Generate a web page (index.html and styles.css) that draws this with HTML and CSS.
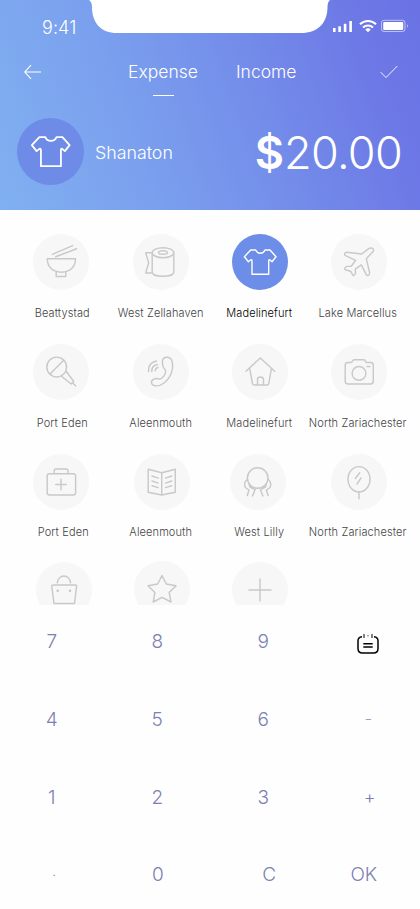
FILE: index.html
```
<!DOCTYPE html>
<html lang="en">
<head>
<meta charset="utf-8">
<title>Add expense</title>
<link rel="stylesheet" href="styles.css">
</head>
<body>
<svg class="defs" width="0" height="0">
  <symbol id="shirt" viewBox="0 0 56 56"><path d="M18.7 16H23.7C24.5 18 25.5 19.2 28.3 19.2S32.2 18 33 16H38L44 22.7L40 27.7L37.8 25.8Q36.7 25.3 36.7 27V40.3H20V27Q20 25.3 18.8 25.8L16.4 27.7L12.4 22.7Z"/></symbol>
</svg>
<div class="screen">
  <header class="top">
    <svg class="notch" viewBox="0 0 242 34"><path d="M0 0Q3 2 3 7C3 23 12 33 28 33H212C229 33 238.500 23 238.500 7Q238.500 2 241 0Z"/></svg>
    <div class="status">
      <span class="time">9:41</span>
      <svg class="signals" viewBox="0 0 76 14">
        <g fill="#fff"><rect x="0" y="9" width="2.6" height="4"/><rect x="5.3" y="7.3" width="2.6" height="5.7"/><rect x="10.8" y="4.8" width="2.6" height="8.2"/><rect x="16.3" y="2" width="2.6" height="11"/></g>
        <g fill="none" stroke="#fff" stroke-width="2"><path d="M27 5.2A11.5 11.5 0 0 1 43 5.2"/><path d="M30 8.4A7.3 7.3 0 0 1 40 8.4"/></g>
        <path d="M32.3 10.6A4 4 0 0 1 37.7 10.6L35 13.2Z" fill="#fff"/>
        <rect x="48.5" y="1.3" width="23.5" height="11.2" rx="2.5" fill="none" stroke="#fff" stroke-opacity=".55"/>
        <rect x="50.2" y="2.9" width="20" height="8" rx="1" fill="#fff"/>
        <path d="M74 5V9Q75.6 7 74 5Z" fill="#fff" fill-opacity=".8"/>
      </svg>
    </div>
    <nav class="nav">
      <svg class="back" viewBox="0 0 18 16"><path d="M17 8H1M7 1.2L.8 8L7 14.8"/></svg>
      <span class="tab expense">Expense</span>
      <span class="tab income">Income</span>
      <svg class="done" viewBox="0 0 18 14"><path d="M.7 7.2L6 12.6L17.3 1"/></svg>
    </nav>
    <div class="summary">
      <span class="avatar"><svg viewBox="0 0 56 56"><use href="#shirt"/></svg></span>
      <span class="name">Shanaton</span>
      <span class="amount"><b>$</b><span class="value">20.00</span></span>
    </div>
  </header>

  <main class="categories">
    <div class="cat"><svg class="icon left" viewBox="0 0 56 56"><path d="M14.3 24.8H42.5C42.5 33 37 38.2 28.4 38.2S14.3 33 14.3 24.8ZM23.2 38V42.5H32.8V38M19.3 20.3L39.7 11.7M22.7 22.7L43.7 14.7"/></svg><span class="label">Beattystad</span></div>
    <div class="cat"><svg class="icon middle" viewBox="0 0 56 56"><ellipse cx="30" cy="18.7" rx="10.8" ry="5"/><ellipse cx="30" cy="18.5" rx="4.5" ry="1.8"/><path d="M19.2 18.7V38.2C19.2 43.7 40.8 43.7 40.8 38.2V18.7M19.2 18.7H12.7L15.7 29L12.7 38.9H19.2"/></svg><span class="label">West Zellahaven</span></div>
    <div class="cat active"><svg class="icon right" viewBox="0 0 56 56"><use href="#shirt"/></svg><span class="label">Madelinefurt</span></div>
    <div class="cat"><svg class="icon right" viewBox="0 0 56 56"><path d="M37 15.2C39.3 13.3 43.5 13.5 42.3 17.2L35.3 24.7L38.7 39C38.5 41.5 36.3 42 35.3 40.7L30.3 30.9L24.2 35.2L24.6 39Q23 43 21.7 40.8L19.7 37.3L14.8 36Q12 34.5 16 32.4L20.3 32.2L24.7 26.3L14 21.3Q12.4 19 16 18.2L30.7 20Z"/></svg><span class="label">Lake Marcellus</span></div>

    <div class="cat"><svg class="icon left" viewBox="0 0 56 56"><circle cx="23.7" cy="23" r="9.9"/><path d="M17 30L30.7 16.3M33 27L40.7 37.5L38.2 40L28.5 32.3M39.5 38.8L42.6 41.8"/></svg><span class="label">Port Eden</span></div>
    <div class="cat"><svg class="icon middle" viewBox="0 0 56 56"><path d="M29.4 18C29.4 12.2 36.2 11.8 38.6 16C41.5 24 38 33.5 31 39C26 43 20 42.5 18.7 39.5C17.3 35.8 22 33.5 26.3 35C29.5 35 33.5 29.5 32.5 26C30.5 24.5 29.4 21 29.4 18ZM15.5 27.5Q14.8 19 23.5 17M18.8 27.5Q18.5 21.7 24.5 20.5M22.3 26.7Q22.2 24 25 23.5"/></svg><span class="label">Aleenmouth</span></div>
    <div class="cat"><svg class="icon right" viewBox="0 0 56 56"><path d="M14 27.3L28.3 14L42.7 27.3M17.7 25L20.5 39.5Q21 41 22.5 41H35Q36.5 41 36.8 39.5L39.3 25M25.5 41V35.5Q25.5 33 28.4 33T31.5 35.5V41"/></svg><span class="label">Madelinefurt</span></div>
    <div class="cat"><svg class="icon right" viewBox="0 0 56 56"><path d="M17 18.5H20Q21.3 18.5 21.5 17Q22 15.7 23.2 15.7H32.8Q34 15.7 34.3 17Q34.7 18.5 36 18.5H39.5Q42.3 18.5 42.3 21.2V37.3Q42.3 40 39.5 40H17Q14.2 40 14.2 37.3V21.2Q14.2 18.5 17 18.5ZM36 22.4H39"/><circle cx="28" cy="29.3" r="6.9"/></svg><span class="label">North Zariachester</span></div>

    <div class="cat lowered"><svg class="icon left" viewBox="0 0 56 56"><rect x="14.2" y="19.7" width="28.4" height="21.2" rx="2.2"/><path d="M21.2 19.5V17Q21.2 15 23 15H33Q35 15 35 17V19.5M28 25.2V35.8M22.7 30.5H33.3"/></svg><span class="label shifted">Port Eden</span></div>
    <div class="cat lowered"><svg class="icon right" viewBox="0 0 56 56"><path d="M27.7 18.7L14.2 15.2V38.3L27.7 41L41.3 38.3V15.2ZM27.7 18.7V41M18 22L24.2 24.1M18 27L24.2 29.1M18 31.7L24.2 33.6M31.5 24.1L37.7 22M31.5 29.1L37.7 27M31.5 33.6L37.7 31.7"/></svg><span class="label">Aleenmouth</span></div>
    <div class="cat lowered"><svg class="icon left" viewBox="0 0 56 56"><circle cx="27.7" cy="24" r="10.3"/><path d="M17.2 25.5C14 27.5 14 32 16 34L19 36L17.3 41.5M18.7 29L20 33L25 35.7L22.5 42M38.2 25.5C41.4 27.5 41.4 32 39.4 34L36.4 36L38.1 41.5M36.7 29L35.4 33L30.4 35.7L32.9 42"/></svg><span class="label">West Lilly</span></div>
    <div class="cat lowered"><svg class="icon right" viewBox="0 0 56 56"><ellipse cx="28" cy="25.3" rx="11" ry="12.7"/><path d="M28 38V44.7M24.3 24.5L28.7 18.7M26 30L30 24"/></svg><span class="label">North Zariachester</span></div>

    <div class="cat"><svg class="icon far-right" viewBox="0 0 56 56"><path d="M17 23H39.5Q40.8 23 40.6 24.3L38.5 41.5H18L15.8 24.3Q15.7 23 17 23ZM21.3 20.8C22.5 11.8 33.5 11.8 34.5 20.8"/><path class="dots" d="M21.7 28.7h.01M34 28.7h.01"/></svg></div>
    <div class="cat"><svg class="icon right raised" viewBox="0 0 56 56"><path d="M28 14.5L32.3 23L42 24.7L35.2 31.5L37 41L28 36.3L19.2 41L20.9 31.5L14 24.7L23.7 23Z"/></svg></div>
    <div class="cat"><svg class="icon right" viewBox="0 0 56 56"><path d="M28 17V39M17 28H39"/></svg></div>
  </main>

  <section class="keypad">
    <span class="key">7</span><span class="key">8</span><span class="key nudged">9</span>
    <span class="key"><svg class="calendar" viewBox="0 0 22 20"><path d="M5 2.8C2.5 3 1 4.5 1 7V14.5C1 17.5 2.5 19 5.5 19H16.5C19.5 19 21 17.5 21 14.5V7C21 4.5 19.5 3 17 2.8M6.300 9.700H15.700M6.300 12.900H15.700"/><path class="rings" d="M7 0V4M15 0V4M10.500 1.800H11.500"/></svg></span>
    <span class="key">4</span><span class="key">5</span><span class="key nudged">6</span><span class="key minus">-</span>
    <span class="key">1</span><span class="key">2</span><span class="key nudged">3</span><span class="key plus">+</span>
    <span class="key dot">.</span><span class="key zero">0</span><span class="key clear">C</span><span class="key ok">OK</span>
  </section>
</div>
</body>
</html>
```
FILE: styles.css
```
* { box-sizing: border-box; }
body { margin: 0; background: #fefefe; font-family: Inter, "Liberation Sans", sans-serif; font-weight: 300; }
.defs { display: block; }
.screen { width: 420px; height: 909px; overflow: hidden; display: flex; flex-direction: column; background: #fefefe; }

.top { position: relative; flex: none; height: 210px; color: #fff; background: linear-gradient(70deg, #80b0f1 0%, #7ba1ee 30%, #748eea 58%, #6d79e6 85%, #6a72e4 100%); }
.notch { position: absolute; left: 89px; top: 0; width: 242px; height: 34px; fill: #fff; }
.status { height: 54px; padding: 0 11px 0 42px; display: flex; align-items: center; justify-content: space-between; }
.time { font-size: 18px; letter-spacing: .1px; }
.signals { width: 76px; height: 14px; margin-bottom: 2px; }
.nav { height: 35px; display: flex; align-items: center; padding: 0 22px 0 24px; }
.nav svg { fill: none; stroke: #fff; stroke-width: 1.1; }
.back { width: 18px; height: 16px; }
.nav .done { width: 18px; height: 14px; margin-left: auto; stroke-width: .9; }
.tab { font-size: 17.5px; white-space: nowrap; }
.expense { position: relative; width: 71px; margin-left: 86px; }
.expense::after { content: ""; position: absolute; left: 25px; top: 34px; width: 21px; height: 1px; background: #fff; }
.income { width: 60px; margin-left: 37px; }
.summary { display: flex; align-items: center; height: 121px; padding: 4px 18px 0 17px; }
.avatar { width: 67px; height: 67px; border-radius: 50%; background: #6e8be7; display: flex; }
.avatar svg { width: 67px; height: 67px; fill: none; stroke: #fff; stroke-width: 1.5; stroke-linejoin: round; }
.name { font-size: 17.8px; margin-left: 11px; padding-top: 1px; }
.amount { margin-left: auto; display: flex; align-items: center; font-size: 45px; line-height: 60px; padding-top: 3px; }
.amount b { font-weight: 600; }
.value { letter-spacing: -.7px; }

.categories { flex: none; height: 395px; overflow: hidden; padding: 24px 0 0 13px; display: grid; grid-template-columns: repeat(4, 98.5px); grid-template-rows: 109.5px 109.5px 108.5px 109px; }
.cat { display: flex; flex-direction: column; align-items: center; }
.icon { flex: none; width: 56px; height: 56px; border-radius: 50%; background: #f7f7f7; fill: none; stroke: #c9c9c9; stroke-width: 1.45; stroke-linejoin: round; stroke-linecap: round; }
.left { margin-right: 2.5px; }
.middle { margin-left: 1px; }
.right { margin-left: 1.5px; }
.far-right { margin-left: 3px; }
.raised { margin-top: -1px; }
.lowered { padding-top: 1px; }
.lowered .label { margin-top: 14px; }
.dots { stroke-width: 2.6; }
.active .icon { background: #6c8ee8; stroke: #fff; stroke-width: 1.4; }
.label { margin-top: 15px; font-size: 11px; letter-spacing: .12px; line-height: 16px; white-space: nowrap; color: #444; }
.shifted { margin-left: 2px; }
.active .label { color: #000; }

.keypad { flex: none; height: 304px; display: grid; grid-template-columns: repeat(4, 105.5px); grid-template-rows: 72px 84px 72px 82px; margin-left: -1px; }
.key { display: flex; align-items: center; justify-content: center; font-size: 19px; color: #7c80b2; }
.key.nudged { padding-left: 1px; }
.key.minus { font-size: 17px; color: #9b9fc4; }
.key.plus { padding-left: 3px; font-size: 18px; }
.key.dot { padding: 0 0 6px 5px; font-size: 12px; }
.key.zero { padding-left: 1px; }
.key.clear { padding-left: 13px; }
.key.ok { padding-right: 9px; }
.calendar { width: 22px; height: 20px; margin-top: 6px; fill: none; stroke: #000; stroke-width: 1.5; }
.rings { stroke-width: 1; }
```
